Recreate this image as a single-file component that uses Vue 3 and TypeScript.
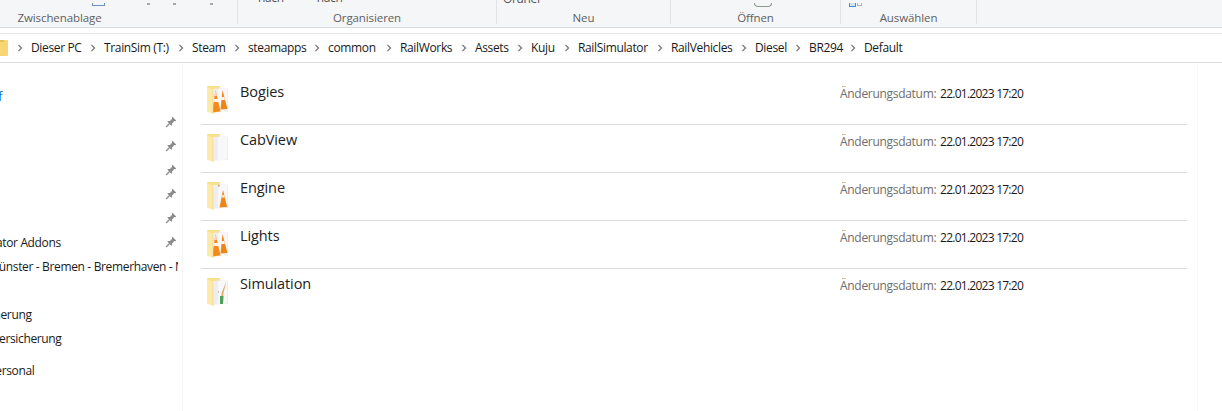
<script setup lang="ts">
type Art = 'two' | 'none' | 'one' | 'sim'
const groups = [
  { label: 'Zwischenablage', w: 238, cmd: 'clip' },
  { label: 'Organisieren', w: 259, cmd: 'org' },
  { label: 'Neu', w: 174, cmd: 'new' },
  { label: 'Öffnen', w: 170, cmd: 'open' },
  { label: 'Auswählen', w: 136, cmd: 'sel' },
]
const crumbs = [
  { t: 'Dieser PC', w: 73 }, { t: 'TrainSim (T:)', w: 88 }, { t: 'Steam', w: 56 },
  { t: 'steamapps', w: 80 }, { t: 'common', w: 72 }, { t: 'RailWorks', w: 75 },
  { t: 'Assets', w: 56 }, { t: 'Kuju', w: 47 }, { t: 'RailSimulator', w: 93 },
  { t: 'RailVehicles', w: 84 }, { t: 'Diesel', w: 54 }, { t: 'BR294', w: 55 },
  { t: 'Default', w: 0 },
]
const rows: { name: string; art: Art }[] = [
  { name: 'Bogies', art: 'two' }, { name: 'CabView', art: 'none' }, { name: 'Engine', art: 'one' },
  { name: 'Lights', art: 'two' }, { name: 'Simulation', art: 'sim' },
]
const nav = [
  { t: 'Schnellzugriff', cut: 68.5, cls: 'link', pin: false },
  { t: '', cut: 0, cls: 'first', pin: true }, { t: '', cut: 0, cls: '', pin: true },
  { t: '', cut: 0, cls: '', pin: true }, { t: '', cut: 0, cls: '', pin: true },
  { t: '', cut: 0, cls: '', pin: true },
  { t: 'Train Simulator Addons', cut: 63, cls: '', pin: true },
  { t: 'Hamburg - Münster - Bremen - Bremerhaven - Norddeich', cut: 71, cls: '', pin: false },
  { t: 'Datensicherung', cut: 52, cls: 'gap', pin: false },
  { t: 'Datenübersicherung', cut: 47, cls: '', pin: false },
  { t: 'Steam Personal', cut: 48, cls: 'gap2', pin: false },
]
</script>

<template>
  <div class="page">
    <header class="ribbon">
      <div v-for="g in groups" :key="g.label" class="group" :class="'g-' + g.cmd" :style="{ width: g.w + 'px' }">
        <div class="cmds" :class="g.cmd">
          <template v-if="g.cmd === 'clip'">
            <i class="blue-box"></i><i class="dot d1"></i><i class="dot d2"></i><i class="dot"></i>
          </template>
          <template v-else-if="g.cmd === 'org'"><span>nach</span><span>nach</span></template>
          <template v-else-if="g.cmd === 'new'"><span>Ordner</span></template>
          <template v-else-if="g.cmd === 'open'"><i class="round"></i></template>
          <template v-else><i class="blue-small"></i><i class="grey-small"></i></template>
        </div>
        <div class="label">{{ g.label }}</div>
      </div>
    </header>

    <nav class="address">
      <svg class="mini" width="9" height="16" viewBox="0 0 9 16">
        <rect x="-4" y="0" width="12" height="16" rx="1" fill="#f8d673" />
        <rect x="-4" y="0" width="8" height="2" fill="#e8c058" />
      </svg>
      <div v-for="c in crumbs" :key="c.t" class="crumb" :style="c.w ? { width: c.w + 'px' } : undefined">
        <svg class="chev" width="6" height="8" viewBox="0 0 6 8">
          <path d="M1.5 1 4.5 4 1.5 7" fill="none" stroke="#7a7a7a" stroke-width="1.3" />
        </svg>
        <span>{{ c.t }}</span>
      </div>
    </nav>

    <div class="body">
      <aside class="pane">
        <div v-for="(n, i) in nav" :key="i" class="nav-item" :class="n.cls">
          <span class="nav-text" :style="{ marginLeft: -n.cut + 'px' }">{{ n.t }}</span>
          <svg v-if="n.pin" class="pin" width="12" height="12" viewBox="0 0 12 12">
            <path d="M7.4 .8 11.2 4.6 10.3 5.3 9.4 5 7.2 7.2 7.2 9 6.3 9.7 2.4 5.8 3 4.9 4.9 4.9 7.1 2.7 6.8 1.7Z" fill="#8b8b8b" />
            <path d="M4.4 7.7 1 11" stroke="#8b8b8b" stroke-width="1.2" />
          </svg>
        </div>
      </aside>

      <main class="list">
        <div v-for="r in rows" :key="r.name" class="row">
          <svg class="folder" width="24" height="30" viewBox="0 0 24 30">
            <path d="M2 1H15V4H23V27H2Z" fill="#fbe08c" />
            <path d="M8 4 22.5 3V26.5L8 28Z" fill="#eeeef2" />
            <path d="M13 4 22.5 3V26.5L13 27.4Z" fill="#f8f8fa" />
            <template v-if="r.art === 'two'">
              <path d="M10.5 5 15.5 26.5 7 27.5Z" fill="#f28a1c" />
              <path d="M10.5 5 11.9 11H9.2Z" fill="#f8d8b8" />
              <path d="M8.8 14H12.8L13.5 17H8.2Z" fill="#fdf2e6" />
              <path d="M17.5 5 22.5 24 15.5 24.6Z" fill="#ee8518" />
              <path d="M16.5 12H19.3L20 15H15.8Z" fill="#fdf2e6" />
            </template>
            <template v-else-if="r.art === 'one'">
              <path d="M18 9 22.2 26 14.5 26.6Z" fill="#ee8518" />
              <path d="M17.4 14H19.3L19.8 16.5H16.8Z" fill="#fdf2e6" />
              <path d="M13.5 3 15 5 13 6Z" fill="#c9a24a" />
            </template>
            <template v-else-if="r.art === 'sim'">
              <path d="M21.5 4 18.5 16 17.5 26 16 26 16.5 16Z" fill="#e9ab6c" />
              <path d="M15 19H18.5L18 27H15Z" fill="#4fa05a" />
              <path d="M13 14 14 14 14 16 13 16Z" fill="#c8c8c8" />
            </template>
            <path d="M2 1.5 8 5V29L2 26.5Z" fill="#fdeaa9" />
            <path d="M8 5V29" stroke="#ecd48a" stroke-width=".6" />
          </svg>
          <div class="name">{{ r.name }}</div>
          <div class="meta"><span class="key">Änderungsdatum:</span> <span class="val">22.01.2023 17:20</span></div>
        </div>
      </main>
      <div class="gutter"></div>
    </div>
  </div>
</template>

<style scoped>
.page { width: 1222px; height: 411px; overflow: hidden; background: #fff; font-family: "Open Sans", "Noto Sans", sans-serif; font-size: 12px; color: #1a1a1a; letter-spacing: -.35px; }
.ribbon { display: flex; height: 28px; box-sizing: border-box; background: #f5f6f7; border-bottom: 1px solid #dadbdc; overflow: hidden; }
.group { box-sizing: border-box; height: 24px; border-right: 1px solid #e2e3e4; display: flex; flex-direction: column; justify-content: flex-end; position: relative; flex: none; }
.g-clip { padding-right: 118px; }
.label { height: 17px; line-height: 17px; margin-bottom: -2px; text-align: center; color: #5f5f5f; font-size: 11.5px; letter-spacing: -.1px; }
.cmds { display: flex; height: 10px; margin-bottom: 4px; color: #555; align-items: flex-start; flex: none; margin-top: -10px; transform: translateY(-1px); }
.clip { padding-left: 92px; }
.org { padding-left: 20px; gap: 33px; }
.new { padding-left: 6px; }
.cmds span { line-height: 10px; margin-top: -1px; }
.new span { margin-top: 0; }
.blue-box { width: 11px; height: 2px; border: 1px solid #6c8ebf; border-top: 0; margin-top: 9px; margin-right: 42px; flex: none; }
.dot { width: 3px; height: 2px; background: #a9a9a9; margin-top: 9px; flex: none; }
.d1 { margin-right: 23px; }
.d2 { margin-right: 34px; }
.open { padding-left: 83px; }
.round { width: 16px; height: 3px; border: 1px solid #8f9a8f; border-top: 0; border-radius: 0 0 8px 8px; margin-top: 9px; }
.sel { padding-left: 8px; gap: 1px; }
.blue-small { width: 5px; height: 3px; border: 1px solid #3f8fdc; border-top: 0; background: #cfe4f7; margin-top: 9px; }
.grey-small { width: 3px; height: 2px; border: 1px solid #b0b0b0; border-top: 0; margin-top: 9px; }
.address { margin-top: 5px; height: 30px; box-sizing: border-box; border-top: 1px solid #e6e6e6; border-bottom: 1px solid #dcdcdc; display: flex; align-items: center; }
.mini { flex: none; margin-right: 8px; }
.crumb { flex: none; display: flex; align-items: center; white-space: nowrap; line-height: 28px; }
.chev { flex: none; margin-right: 8px; }
.body { display: flex; height: 348px; }
.pane { flex: none; box-sizing: border-box; border-right: 1px solid #f6f6f6; padding-top: 21px; overflow: hidden; width: 183px; }
.nav-item { height: 24px; width: 178px; display: flex; align-items: center; overflow: hidden; white-space: nowrap; position: relative; }
.nav-text { flex: none; }
.link { color: #0066cc; margin-bottom: 2px; }
.gap { margin-top: 24px; }
.gap2 { margin-top: 8px; }
.pin { position: absolute; left: 165px; top: 6px; }
.list { width: 1014px; flex: none; box-sizing: border-box; padding: 14px 0 0 18px; }
.row { width: 986px; height: 48px; box-sizing: border-box; border-bottom: 1px solid #d9d9d9; display: flex; align-items: flex-start; }
.row:last-child { border-bottom: 0; }
.folder { flex: none; margin: 8px 0 0 4px; filter: blur(.35px); }
.name { flex: none; width: 600px; margin-left: 11px; margin-top: 3px; font-size: 14.5px; line-height: 24px; letter-spacing: -.1px; color: #222; }
.meta { margin-top: 7px; line-height: 20px; white-space: nowrap; font-size: 12px; }
.key { color: #6d6d6d; letter-spacing: -.3px; }
.val { color: #1a1a1a; letter-spacing: -.75px; margin-left: 1px; }
.gutter { width: 25px; flex: none; border-left: 1px solid #f7f7f7; }
</style>
